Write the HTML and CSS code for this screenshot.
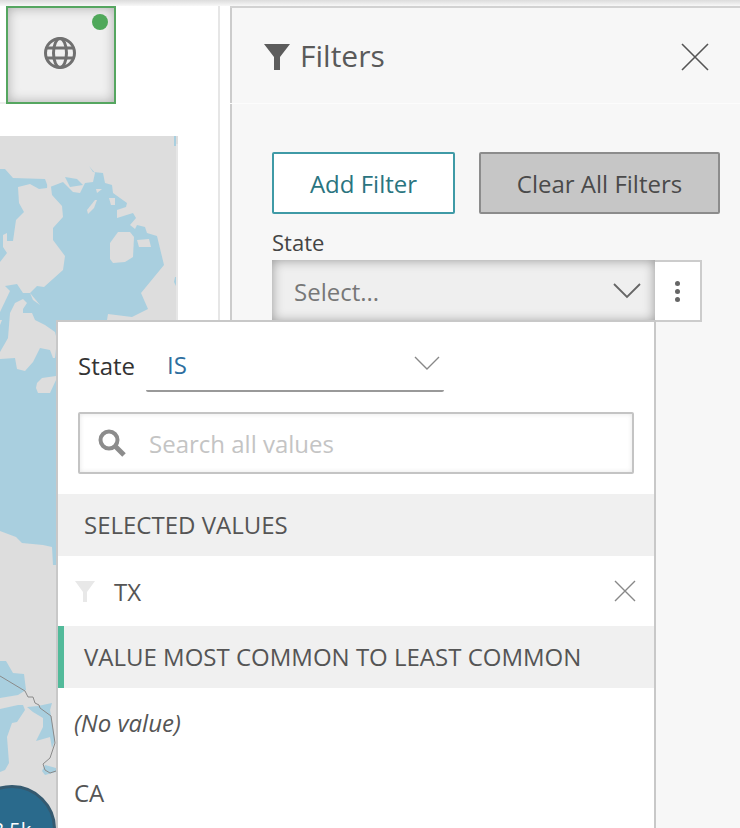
FILE: index.html
```html
<!DOCTYPE html>
<html lang="en">
<head>
    <meta charset="UTF-8">
    <meta name="viewport" content="width=device-width, initial-scale=1.0">
    <title>Filters</title>
    <link rel="stylesheet" href="styles.css">
</head>
<body>
    <div class="top-shade"></div>
    <div class="main">
        <div class="left-pane">
            <div class="tile-row">
                <div class="tile">
                    <span class="tile-dot"></span>
                    <svg class="globe" width="32" height="32" viewBox="0 0 32 32" fill="none" stroke="#707070" stroke-width="3">
                        <circle cx="16" cy="16" r="14.5"/>
                        <ellipse cx="16" cy="16" rx="6.5" ry="14.5"/>
                        <path d="M2 11h28M2 21h28"/>
                    </svg>
                </div>
            </div>
            <div class="map">
                <svg class="map-svg" width="178" height="692" viewBox="0 136 178 692">
                    <rect class="map-edge" x="176" y="144" width="2" height="684"/>
                    <polygon class="water" points="0,169 5,169 13,178 45,179 48,187 50,187 63,182 73,192 80,193 85,183 93,182 95,173 89,166 93,172 103,173 105,183 112,185 113,193 127,203 126,207 117,210 117,218 133,213 136,218 130,225 135,229 137,225 145,227 147,233 157,236 164,265 141,293 148,309 132,317 108,314 107,320 107,560 58,560 56,565 53,565 52,547 43,545 22,543 16,537 0,531"/>
                    <polygon class="water" points="65,177 77,179 83,185 70,187"/>
                    <polygon class="water" points="174,136 176,136 176,146 174,146"/>
                    <polygon class="water" points="175,277 176,277 176,286 174,282"/>
                    <polygon class="land" points="18,187 30,184 39,189 47,188 48,179 51,187 52,195 62,206 63,217 53,228 53,240 65,256 63,270 44,287 37,286 30,293 23,293 17,284 5,286 0,287 0,262 7,253 3,247 3,235 7,233 7,241 13,241 16,220 24,212 19,203"/>
                    <polygon class="land" points="0,286 5,286 10,291 0,312"/>
                    <polygon class="land" points="30,293 40,305 33,300"/>
                    <polygon class="land" points="0,320 2,320 0,325"/>
                    <polygon class="land" points="23,299 27,303 23,309 23,313 32,313 35,320 45,325 55,332 57,340 55,358 53,358 50,350 40,348 33,362 25,371 17,369 15,358 0,359 0,352 8,338 10,313 15,303"/>
                    <polygon class="land" points="37,383 42,378 56,376 56,380 50,393 38,393 36,388"/>
                    <polygon class="land" points="118,232 130,232 134,237 133,257 125,262 113,263 110,259 110,243"/>
                    <polygon class="land" points="137,240 149,239 151,247 139,247"/>
                    <polygon class="land" points="96,189 102,189 97,193"/>
                    <polygon class="land" points="87,210 95,200 97,200 94,208 88,214"/>
                    <polygon class="land" points="109,198 115,198 115,205 111,205"/>
                    <polygon class="water" points="0,661 6,661 13,673 24,674 26,690 18,695 0,698"/>
                    <polygon class="water" points="0,709 18,705 23,705 25,710 17,722 12,723 7,737 9,763 5,770 0,772"/>
                    <polygon class="water" points="27,707 38,706 52,703 50,710 55,740 52,748 50,737 36,741 43,727 43,718 33,712"/>
                    <polygon class="water" points="42,771 45,765 56,768 56,772 45,775"/>
                    <polyline class="border-line" points="0,676 25,691 28,697 33,697 35,703 39,705 40,708 51,716 55,743 50,758 43,764 45,770 50,773 56,771"/>
                </svg>
                <div class="cluster">3.5k</div>
            </div>
        </div>

        <div class="panel">
            <div class="panel-head">
                <svg class="head-funnel" width="26" height="26" viewBox="0 0 26 26">
                    <path d="M0 0h26L16 13v13h-6V13z" fill="#5c5c5c"/>
                </svg>
                <span class="panel-title">Filters</span>
                <svg class="head-close" width="28" height="28" viewBox="0 0 28 28" fill="none" stroke="#555" stroke-width="1.6">
                    <path d="M1 1l26 26M27 1L1 27"/>
                </svg>
            </div>
            <div class="panel-body">
                <div class="btn-row">
                    <button class="btn btn-add">Add Filter</button>
                    <button class="btn btn-clear">Clear All Filters</button>
                </div>
                <div class="field-label">State</div>
                <div class="field">
                    <div class="select">
                        <span>Select...</span>
                        <svg width="28" height="16" viewBox="0 0 28 16" fill="none" stroke="#666" stroke-width="1.8">
                            <path d="M1 1l13 13L27 1"/>
                        </svg>
                    </div>
                    <div class="kebab">
                        <span></span><span></span><span></span>
                    </div>

                    <div class="popover">
                        <div class="pop-top">
                            <span class="pop-label">State</span>
                            <div class="operator">
                                <span>IS</span>
                                <svg width="26" height="14" viewBox="0 0 26 14" fill="none" stroke="#888" stroke-width="1.4">
                                    <path d="M1 1l12 12L25 1"/>
                                </svg>
                            </div>
                        </div>
                        <div class="search">
                            <svg width="28" height="28" viewBox="0 0 28 28" fill="none" stroke="#8c8c8c">
                                <circle cx="11" cy="11" r="8.5" stroke-width="4"/>
                                <path d="M17 17l9 9" stroke-width="5"/>
                            </svg>
                            <span>Search all values</span>
                        </div>
                        <div class="group-head">SELECTED VALUES</div>
                        <div class="value-row">
                            <svg width="20" height="21" viewBox="0 0 20 21">
                                <path d="M0 0h20L12 11v10H8V11z" fill="#e8e8e8"/>
                            </svg>
                            <span class="value-name">TX</span>
                            <svg class="value-x" width="22" height="22" viewBox="0 0 22 22" fill="none" stroke="#888" stroke-width="1.4">
                                <path d="M1 1l20 20M21 1L1 21"/>
                            </svg>
                        </div>
                        <div class="group-head group-sorted">VALUE MOST COMMON TO LEAST COMMON</div>
                        <div class="option option-none">(No value)</div>
                        <div class="option">CA</div>
                    </div>
                </div>
            </div>
        </div>
    </div>
</body>
</html>
```

FILE: styles.css
```css
* {
    box-sizing: border-box;
    margin: 0;
    padding: 0;
}
body {
    font-family: 'Open Sans', 'Noto Sans', sans-serif;
    color: #555;
    background: white;
    height: 828px;
    overflow: hidden;
}
.top-shade {
    height: 6px;
    background: linear-gradient(#dcdcdc, #f8f8f8);
}
.main {
    display: flex;
    height: 822px;
}
.left-pane {
    width: 220px;
    margin-right: 10px;
    border-right: 2px solid #e6e6e6;
}
.tile-row {
    height: 98px;
    width: 116px;
    padding-left: 6px;
    border-bottom: 2px solid #eee;
}
.tile {
    position: relative;
    width: 110px;
    height: 98px;
    display: flex;
    align-items: center;
    justify-content: center;
    background: #f0f0f0;
    border: 2px solid #55a660;
    box-shadow: inset 0 0 12px rgba(0,0,0,0.28);
}
.tile-dot {
    position: absolute;
    top: 6px;
    right: 6px;
    width: 16px;
    height: 16px;
    border-radius: 50%;
    background: #4fa85a;
}
.globe {
    margin: 0 2px 4px 0;
}
.map {
    position: relative;
    width: 178px;
    height: 692px;
    margin-top: 32px;
    overflow: hidden;
    background: #ddd;
}
.map-svg {
    display: block;
}
.map-edge {
    fill: #e6e6e6;
}
.water {
    fill: #a9cfdf;
}
.land {
    fill: #ddd;
}
.border-line {
    fill: none;
    stroke: #8a8a8a;
    stroke-width: 1;
}
.cluster {
    position: absolute;
    left: -32px;
    top: 649px;
    width: 88px;
    height: 88px;
    display: flex;
    align-items: center;
    justify-content: center;
    border-radius: 50%;
    background: #2a6a8c;
    border: 3px solid #355a70;
    color: white;
    font-size: 20px;
}
.panel {
    flex: 1;
    border-top: 2px solid #d2d2d2;
    background: #fcfcfc;
}
.panel-head {
    display: flex;
    align-items: center;
    height: 95px;
    padding: 3px 31px 0 32px;
    margin-bottom: 1px;
    background: #f7f7f7;
    border-left: 2px solid #ccc;
}
.panel-title {
    margin-left: 10px;
    font-size: 30px;
    line-height: 36px;
    margin-top: -2px;
    color: #5a5a5a;
}
.head-close {
    margin-left: auto;
}
.panel-body {
    height: 724px;
    padding: 48px 0 0 40px;
    background: #f7f7f7;
    border-left: 2px solid #ccc;
}
.btn-row {
    display: flex;
    gap: 24px;
}
.btn {
    height: 62px;
    font-family: inherit;
    font-size: 24px;
    border-radius: 2px;
    cursor: pointer;
}
.btn-add {
    width: 183px;
    background: white;
    border: 2px solid #3f9aa6;
    color: #2a7480;
}
.btn-clear {
    width: 241px;
    background: #c6c6c6;
    border: 2px solid #8c8c8c;
    color: #4a4a4a;
}
.field-label {
    height: 46px;
    padding-top: 14px;
    font-size: 22px;
    line-height: 28px;
    color: #444;
}
.field {
    position: relative;
    display: flex;
    width: 430px;
    height: 62px;
}
.select {
    flex: 1;
    display: flex;
    align-items: center;
    justify-content: space-between;
    padding: 0 14px 0 22px;
    background: #efefef;
    box-shadow: inset 0 0 12px rgba(0,0,0,0.38);
    font-size: 24px;
    color: #777;
}
.kebab {
    width: 47px;
    display: flex;
    flex-direction: column;
    align-items: center;
    justify-content: center;
    gap: 3px;
    background: white;
    border: 2px solid #ccc;
    border-left: none;
}
.kebab span {
    width: 5px;
    height: 5px;
    border-radius: 50%;
    background: #666;
}
.popover {
    position: absolute;
    left: -216px;
    top: 60px;
    width: 600px;
    height: 520px;
    background: white;
    border: 2px solid #c8c8c8;
    border-bottom: none;
}
.pop-top {
    display: flex;
    height: 70px;
    padding-left: 20px;
}
.pop-label {
    width: 68px;
    padding-top: 27px;
    font-size: 24px;
    line-height: 34px;
    color: #333;
}
.operator {
    display: flex;
    align-items: center;
    justify-content: space-between;
    width: 298px;
    height: 70px;
    padding: 17px 4px 0 21px;
    border-bottom: 2px solid #999;
    border-radius: 0 0 2px 2px;
    font-size: 24px;
    color: #2f6f9f;
}
.operator svg {
    margin-bottom: 4px;
}
.search {
    display: flex;
    align-items: center;
    gap: 23px;
    width: 556px;
    height: 62px;
    margin: 20px 0 20px 20px;
    padding-left: 18px;
    border: 2px solid #c4c4c4;
    border-radius: 2px;
    box-shadow: inset 0 0 5px rgba(0,0,0,0.1);
    font-size: 24px;
    color: #c4c4c4;
}
.group-head {
    height: 62px;
    padding-left: 26px;
    background: #f0f0f0;
    font-size: 24px;
    line-height: 62px;
    color: #555;
}
.group-sorted {
    border-left: 6px solid #52ba9a;
    padding-left: 20px;
}
.value-row {
    display: flex;
    align-items: center;
    height: 70px;
    padding: 0 18px 0 17px;
}
.value-name {
    margin-left: 19px;
    font-size: 24px;
}
.value-x {
    margin-left: auto;
}
.option {
    height: 70px;
    padding-left: 16px;
    font-size: 24px;
    line-height: 70px;
}
.option-none {
    font-style: italic;
}
```
